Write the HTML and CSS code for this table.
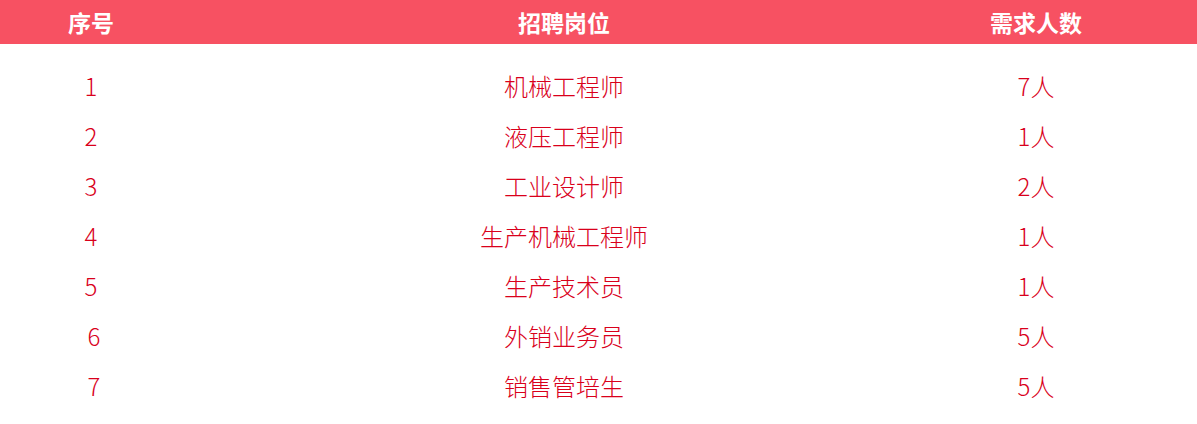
FILE: index.html
```html
<!DOCTYPE html>
<html lang="zh">
<head>
<meta charset="utf-8">
<link rel="stylesheet" href="styles.css">
</head>
<body>
<div class="table">
  <div class="row head">
    <div class="c1">序号</div>
    <div class="c2">招聘岗位</div>
    <div class="c3">需求人数</div>
  </div>
  <div class="body">
    <div class="row"><div class="c1">1</div><div class="c2">机械工程师</div><div class="c3">7人</div></div>
    <div class="row"><div class="c1">2</div><div class="c2">液压工程师</div><div class="c3">1人</div></div>
    <div class="row"><div class="c1">3</div><div class="c2">工业设计师</div><div class="c3">2人</div></div>
    <div class="row"><div class="c1">4</div><div class="c2">生产机械工程师</div><div class="c3">1人</div></div>
    <div class="row"><div class="c1">5</div><div class="c2">生产技术员</div><div class="c3">1人</div></div>
    <div class="row"><div class="c1 shift">6</div><div class="c2">外销业务员</div><div class="c3">5人</div></div>
    <div class="row"><div class="c1 shift">7</div><div class="c2">销售管培生</div><div class="c3">5人</div></div>
  </div>
</div>
</body>
</html>
```
FILE: styles.css
```css
html, body {
  margin: 0;
  padding: 0;
  background: #ffffff;
}
body {
  font-family: "Noto Sans CJK SC", "Noto Sans", sans-serif;
}
.table {
  width: 1197px;
}
.row {
  display: grid;
  grid-template-columns: 182px 764px 180px;
  height: 50px;
  align-items: center;
  font-size: 24px;
  font-weight: 300;
  color: #d9001b;
}
.row > div {
  text-align: center;
}
.head {
  height: 44px;
  background: #f75162;
  color: #ffffff;
  font-size: 23px;
  font-weight: bold;
}
.body {
  padding-top: 16px;
}
.shift {
  padding-left: 6px;
}
```
